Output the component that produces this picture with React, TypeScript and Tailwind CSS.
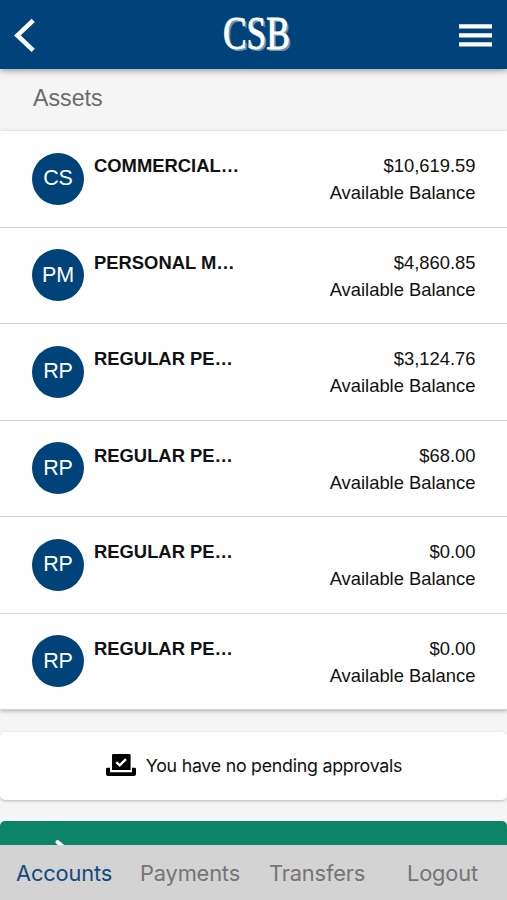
import { useState } from "react";

type Account = {
  id: number;
  initials: string;
  name: string;
  balance: string;
};

type NavItem = {
  label: string;
  className: string;
};

const ACCOUNTS: Account[] = [
  { id: 1, initials: "CS", name: "COMMERCIAL…", balance: "$10,619.59" },
  { id: 2, initials: "PM", name: "PERSONAL M…", balance: "$4,860.85" },
  { id: 3, initials: "RP", name: "REGULAR PE…", balance: "$3,124.76" },
  { id: 4, initials: "RP", name: "REGULAR PE…", balance: "$68.00" },
  { id: 5, initials: "RP", name: "REGULAR PE…", balance: "$0.00" },
  { id: 6, initials: "RP", name: "REGULAR PE…", balance: "$0.00" },
];

const NAV_ITEMS: NavItem[] = [
  { label: "Accounts", className: "w-[124px]" },
  { label: "Payments", className: "w-[129px]" },
  { label: "Transfers", className: "w-[138px]" },
  { label: "Logout", className: "w-[90px]" },
];

function Logo() {
  return (
    <span className="font-['Liberation_Serif',serif] [-webkit-text-stroke:0.9px_#ffffff] text-[46px] leading-[60px] text-white translate-x-[3px] -translate-y-px scale-x-[0.77] [text-shadow:2.5px_1.5px_0_#6f93b3]">
      CSB
    </span>
  );
}

function Header() {
  return (
    <header className="relative z-10 h-[69px] flex-shrink-0 bg-[#00427a] flex items-center justify-between pl-[14px] pr-[15px] shadow-[0_2px_6px_rgba(0,0,0,0.35)]">
      <button aria-label="Back" className="w-[33px]">
        <svg className="w-[22px] h-[36px]" viewBox="0 0 22 36" fill="none" stroke="#ffffff" strokeWidth="4.6">
          <path d="M19.2 3.3L3.4 18.4L19.2 33.4" />
        </svg>
      </button>
      <Logo />
      <button aria-label="Menu">
        <svg className="w-[33px] h-[24px]" viewBox="0 0 33 24" fill="#ffffff">
          <path d="M0 1.2h33v4.4H0zM0 10.2h33v4.2H0zM0 19.2h33v4.2H0z" />
        </svg>
      </button>
    </header>
  );
}

function AccountRow({ account }: { account: Account }) {
  return (
    <li className="h-[96.5px] flex pl-[32px] pr-[31.5px] border-b border-[#d4d4d4]">
      <div className="mt-[21.5px] size-[52px] rounded-full bg-[#00427a] text-white text-[21.5px] tracking-[-0.2px] flex items-center justify-center">
        {account.initials}
      </div>
      <div className="mt-[21px] ml-[10px] flex-1 text-[18.4px] leading-[27px] font-bold">{account.name}</div>
      <div className="mt-[21px] text-right text-[18.4px] leading-[27px]">
        <p>{account.balance}</p>
        <p>Available Balance</p>
      </div>
    </li>
  );
}

function BallotIcon() {
  return (
    <svg className="w-[30px] h-[22px]" viewBox="0 0 30 22">
      <path fill="#000000" d="M7.2 0h16.2a1.2 1.2 0 011.2 1.2V16H6V1.2A1.2 1.2 0 017.2 0z" />
      <path fill="none" stroke="#ffffff" strokeWidth="2.4" d="M10.3 8.2l3.4 3.1L20 5.2" />
      <path fill="#000000" d="M0 15.2Q0 13.8 1.4 13.8H4V18.2h22v-4.4h2.6Q30 13.8 30 15.2V20q0 2-2 2H2q-2 0-2-2z" />
      <path fill="#ffffff" d="M4 16.6h22v1H4z" />
    </svg>
  );
}

export default function App() {
  const [activeTab, setActiveTab] = useState("Accounts");

  return (
    <div className="h-[900px] w-[507px] overflow-hidden flex flex-col bg-[#f5f5f5] text-[#111111] font-['Liberation_Sans',Arial,sans-serif]">
      <Header />

      <main className="flex-1 min-h-0 overflow-hidden">
        <h2 className="h-[62px] pl-[33px] pt-[14px] text-[23.2px] leading-[30px] text-[#6b6b6b]">Assets</h2>

        <ul className="bg-white shadow-[0_1px_4px_rgba(0,0,0,0.3)]">
          {ACCOUNTS.map((account) => (
            <AccountRow key={account.id} account={account} />
          ))}
        </ul>

        <div className="mt-[22px] h-[68px] rounded-[5px] bg-white shadow-[0_1px_3px_rgba(0,0,0,0.25)] flex items-center justify-center gap-[10px] pl-px">
          <div className="-mt-[3px]">
            <BallotIcon />
          </div>
          <span className="font-[Inter,sans-serif] text-[17.8px] tracking-[-0.25px] whitespace-nowrap">You have no pending approvals</span>
        </div>

        <div className="mt-[21px] h-[68px] rounded-[5px] bg-[#0c8467] pl-[54px] pt-[18px]">
          <svg className="w-[24px] h-[24px]" viewBox="0 0 24 24" fill="none" stroke="#ffffff" strokeWidth="4" strokeLinecap="round">
            <path d="M3.5 3L13 11L3.5 19" />
          </svg>
        </div>
      </main>

      <nav className="h-[55px] flex-shrink-0 bg-[#d3d3d3] flex items-center pl-[16px] pt-px font-[Inter,sans-serif] text-[21.8px] tracking-[-0.15px]">
        {NAV_ITEMS.map((item) => (
          <button
            key={item.label}
            onClick={() => setActiveTab(item.label)}
            className={`${item.className} text-left whitespace-nowrap ${activeTab === item.label ? "text-[#14497d]" : "text-[#757575]"}`}
          >
            {item.label}
          </button>
        ))}
      </nav>
    </div>
  );
}
